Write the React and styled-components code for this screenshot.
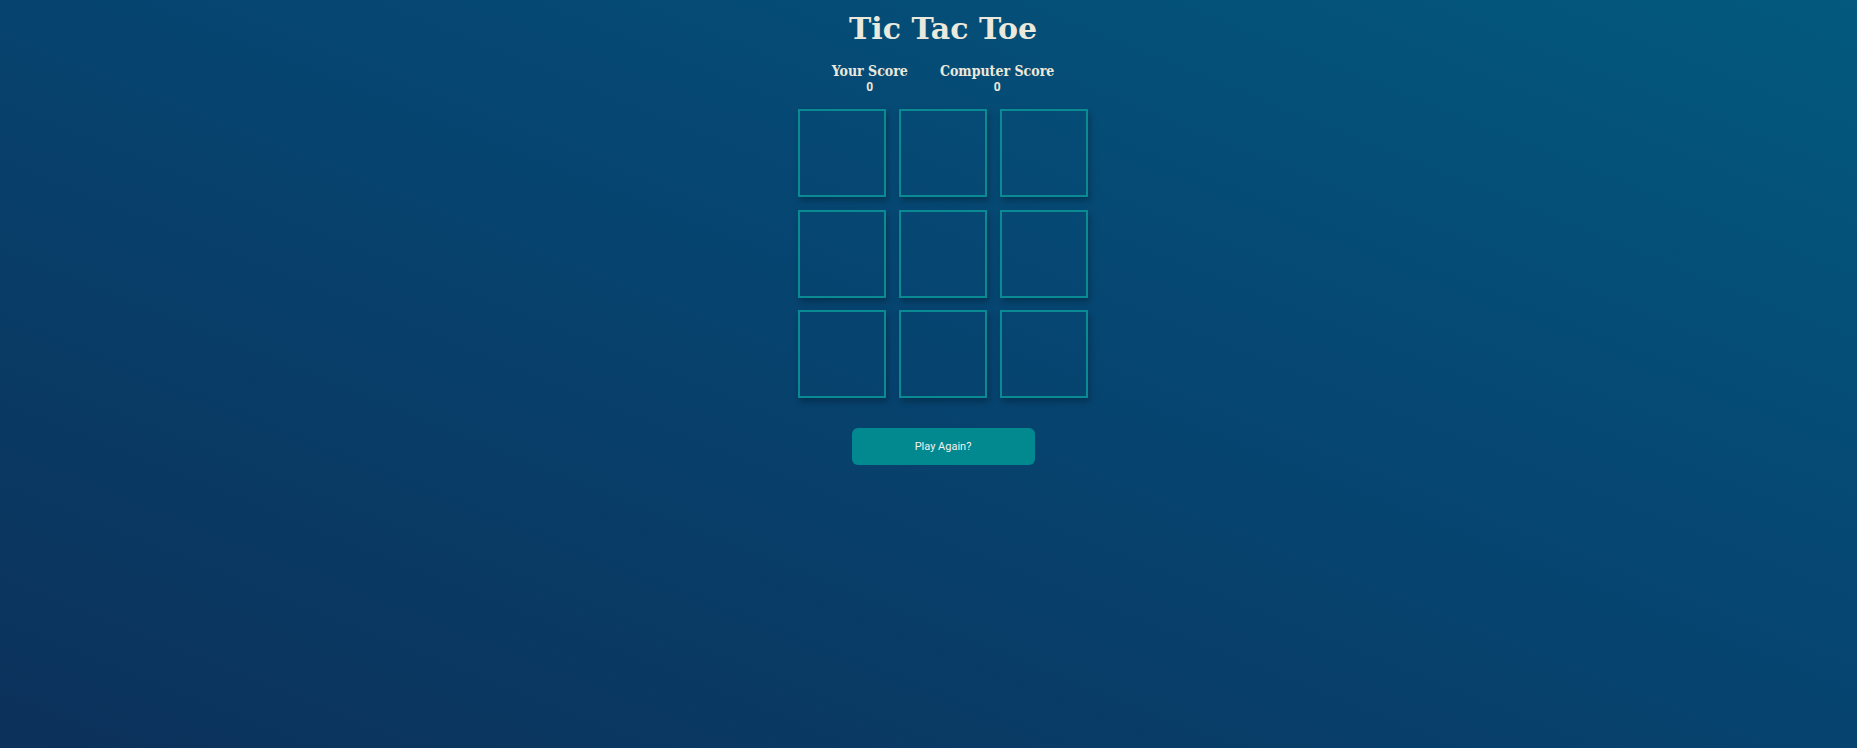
import styled, { createGlobalStyle } from "styled-components";

const GlobalStyle = createGlobalStyle`
  html, body {
    margin: 0;
    padding: 0;
  }
  body {
    min-height: 100vh;
    background: linear-gradient(to top right, #0c315a 0%, #064571 55%, #03597e 100%);
    background-attachment: fixed;
  }
`;

const Page = styled.div`
  min-height: 100vh;
  display: flex;
  flex-direction: column;
  align-items: center;
  padding-left: 29px;
  box-sizing: border-box;
`;

const Title = styled.h1`
  margin: 9px 0 0 0;
  font-family: "DejaVu Serif", serif;
  font-size: 30px;
  font-weight: 700;
  line-height: 40px;
  color: #ebe8dc;
`;

const ScoreBoard = styled.div`
  display: flex;
  gap: 32px;
  margin-top: 14px;
`;

const Score = styled.div`
  display: flex;
  flex-direction: column;
  align-items: center;
  font-family: "DejaVu Serif Condensed", "DejaVu Serif", serif;
  font-weight: 700;
  color: #ebe8dc;
`;

const ScoreLabel = styled.span`
  font-size: 14px;
  line-height: 16px;
`;

const ScoreValue = styled.span`
  margin-top: 2px;
  font-family: "Roboto", sans-serif;
  font-size: 12px;
  line-height: 12px;
`;

const Board = styled.div`
  display: grid;
  grid-template-columns: repeat(3, 88px);
  grid-auto-rows: 88px;
  column-gap: 13px;
  row-gap: 12.5px;
  margin-top: 16px;
`;

const Cell = styled.div`
  box-sizing: border-box;
  border: 2px solid #0a8a93;
  box-shadow: 2px 4px 6px rgba(0, 0, 0, 0.25);
`;

const Button = styled.button`
  margin-top: 30px;
  width: 183px;
  height: 37px;
  border: none;
  border-radius: 6px;
  background: #02898f;
  color: #f2f2f2;
  font-family: "Roboto", sans-serif;
  font-size: 11px;
  cursor: pointer;
`;

const App = () => {
  return (
    <>
      <GlobalStyle />
      <Page>
        <Title>Tic Tac Toe</Title>
        <ScoreBoard>
          <Score>
            <ScoreLabel>Your Score</ScoreLabel>
            <ScoreValue>0</ScoreValue>
          </Score>
          <Score>
            <ScoreLabel>Computer Score</ScoreLabel>
            <ScoreValue>0</ScoreValue>
          </Score>
        </ScoreBoard>
        <Board>
          {Array.from({ length: 9 }).map((_, i) => (
            <Cell key={i} />
          ))}
        </Board>
        <Button>Play Again?</Button>
      </Page>
    </>
  );
};

export default App;
